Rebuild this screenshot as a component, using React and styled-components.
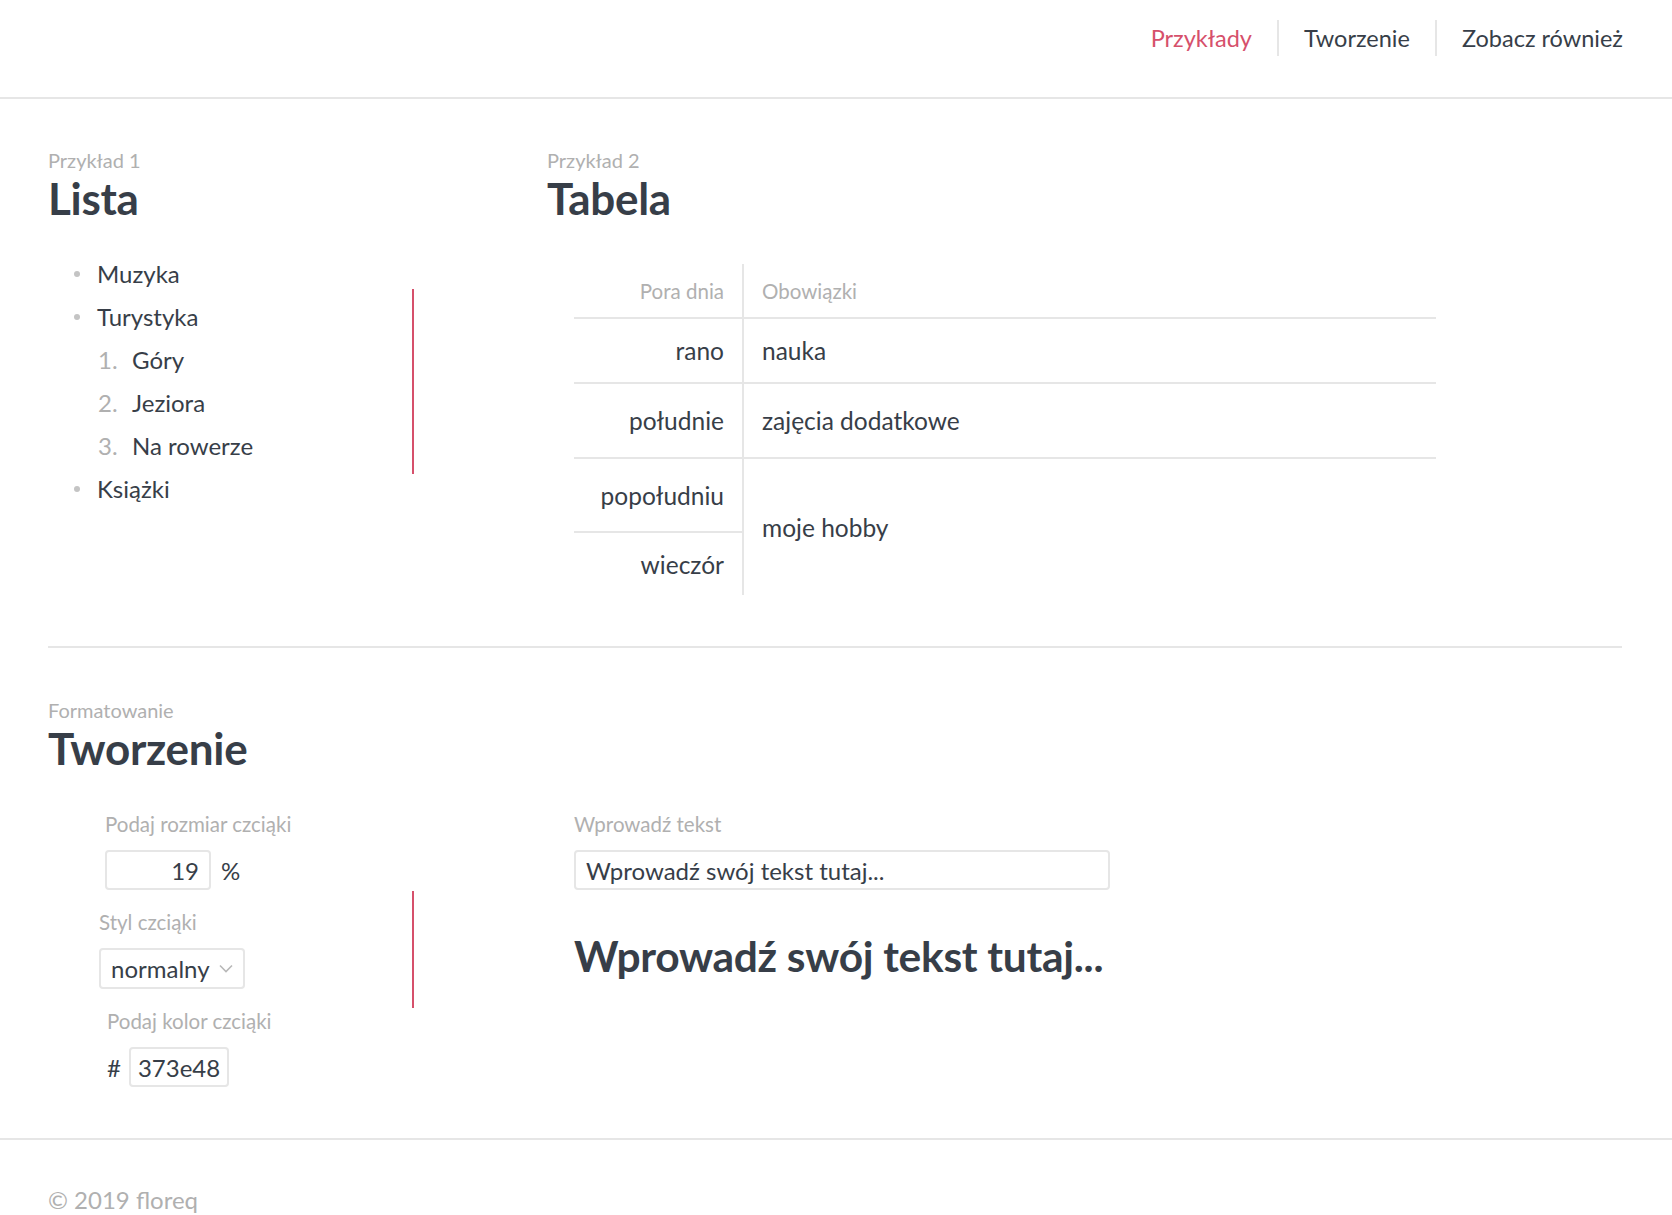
import React from 'react'
import styled, { createGlobalStyle } from 'styled-components'

const GlobalStyle = createGlobalStyle`
  html, body {
    margin: 0;
    padding: 0;
    background: #fff;
  }
  body {
    font-family: Lato, 'Noto Sans', sans-serif;
    color: #373e48;
  }
  * {
    box-sizing: border-box;
  }
`

const colors = {
  text: '#373e48',
  muted: '#b0b0b0',
  accent: '#d6506b',
  line: '#e6e6e6',
}

const Header = styled.header`
  height: 99px;
  border-bottom: 2px solid ${colors.line};
  display: flex;
  justify-content: flex-end;
  align-items: flex-start;
  padding: 20px 49px 0 0;
`

const Nav = styled.nav`
  display: flex;
`

const NavLink = styled.a`
  font-size: 23.5px;
  line-height: 36px;
  padding: 0 25px;
  color: ${({ active }) => (active ? colors.accent : colors.text)};
  text-decoration: none;
  border-left: 2px solid ${colors.line};
  cursor: pointer;

  &:first-child {
    border-left: none;
  }
  &:last-child {
    padding-right: 0;
  }
`

const Main = styled.main`
  padding: 0 50px 0 48px;
`

const Section = styled.section`
  display: grid;
  grid-template-columns: ${({ cols }) => cols || '1fr'};
  padding: ${({ pad }) => pad || '49px 0 51px'};
  border-bottom: ${({ divider }) => (divider ? `2px solid ${colors.line}` : 'none')};
`

const Kicker = styled.div`
  font-size: 20px;
  line-height: 24px;
  color: ${colors.muted};
`

const Title = styled.h2`
  font-size: 44px;
  font-weight: 700;
  line-height: 52px;
  margin: 0;
  color: ${colors.text};
  letter-spacing: -0.3px;
`

const SplitRow = styled.div`
  display: flex;
  align-items: center;
  margin-top: ${({ top }) => top || '28px'};
`

const RedRule = styled.div`
  width: 2px;
  height: ${({ h }) => h || '185px'};
  background: ${colors.accent};
  flex: none;
`

const BulletList = styled.ul`
  width: 364px;
  flex: none;
  margin: 0;
  padding: 0 0 0 49px;
  list-style: none;
`

const BulletItem = styled.li`
  font-size: 24px;
  line-height: 43px;
  position: relative;

  &::before {
    content: '';
    position: absolute;
    left: -23px;
    top: 19px;
    width: 6px;
    height: 6px;
    border-radius: 50%;
    background: #c4c4c4;
  }
`

const NumberList = styled.ol`
  margin: 0;
  padding: 0 0 0 35px;
  list-style: none;
  counter-reset: num;
`

const NumberItem = styled.li`
  counter-increment: num;
  position: relative;

  &::before {
    content: counter(num) '.';
    position: absolute;
    left: -34px;
    color: ${colors.muted};
  }
`

const TableWrap = styled.div`
  margin: 40px 0 0 27px;
`

const Table = styled.table`
  width: 862px;
  border-collapse: collapse;
  font-size: 24.5px;
`

const HeadCell = styled.th`
  font-weight: 400;
  font-size: 20.5px;
  color: ${colors.muted};
  height: 54px;
  padding: 0 18px;
  text-align: ${({ right }) => (right ? 'right' : 'left')};
  border-bottom: 2px solid ${colors.line};
  border-left: ${({ right }) => (right ? 'none' : `2px solid ${colors.line}`)};
  width: ${({ w }) => w || 'auto'};
`

const Row = styled.tr`
  height: ${({ h }) => h};
`

const Cell = styled.td`
  padding: 0 18px;
  text-align: ${({ right }) => (right ? 'right' : 'left')};
  border-bottom: ${({ last }) => (last ? 'none' : `2px solid ${colors.line}`)};
  border-left: ${({ right }) => (right ? 'none' : `2px solid ${colors.line}`)};
  vertical-align: middle;
`

const Controls = styled.div`
  width: 364px;
  flex: none;
  display: flex;
  flex-direction: column;
`

const Field = styled.div`
  padding-left: ${({ indent }) => indent};
  margin-bottom: ${({ mb }) => mb || '0'};
`

const FieldLabel = styled.label`
  display: block;
  font-size: 20.5px;
  line-height: 24px;
  color: ${colors.muted};
  margin-bottom: 14px;
`

const InlineRow = styled.div`
  display: flex;
  align-items: center;
  gap: ${({ gap }) => gap || '10px'};
  font-size: 24px;
`

const Box = styled.input`
  font-family: inherit;
  font-size: 24px;
  color: ${colors.text};
  height: 40px;
  width: ${({ w }) => w};
  border: 2px solid ${colors.line};
  border-radius: 4px;
  padding: 0 ${({ px }) => px || '10px'};
  text-align: ${({ align }) => align || 'left'};
  outline: none;
  background: #fff;
`

const SelectBox = styled.div`
  display: inline-flex;
  align-items: center;
  gap: 9px;
  height: 41px;
  padding: 0 10px;
  border: 2px solid ${colors.line};
  border-radius: 4px;
  font-size: 24px;
  cursor: pointer;
`

const Preview = styled.p`
  margin: 40px 0 0;
  font-size: 42.5px;
  font-weight: 700;
  line-height: 52px;
  letter-spacing: -0.3px;
`

const Footer = styled.footer`
  border-top: 2px solid ${colors.line};
  margin-top: 51px;
  padding: 45px 48px 0;
  font-size: 24px;
  color: ${colors.muted};
`

const Chevron = () => (
  <svg width="14" height="9" viewBox="0 0 14 9" fill="none">
    <path d="M1 1.5l6 6 6-6" stroke="#b8b8b8" strokeWidth="1.6" />
  </svg>
)

const rows = [
  { time: 'rano', duty: 'nauka', h: '65px' },
  { time: 'południe', duty: 'zajęcia dodatkowe', h: '75px' },
]

export default function App() {
  return (
    <>
      <GlobalStyle />
      <Header>
        <Nav>
          <NavLink active>Przykłady</NavLink>
          <NavLink>Tworzenie</NavLink>
          <NavLink>Zobacz również</NavLink>
        </Nav>
      </Header>
      <Main>
        <Section cols="499px 1fr" divider>
          <div>
            <Kicker>Przykład 1</Kicker>
            <Title>Lista</Title>
            <SplitRow>
              <BulletList>
                <BulletItem>Muzyka</BulletItem>
                <BulletItem>
                  Turystyka
                  <NumberList>
                    <NumberItem>Góry</NumberItem>
                    <NumberItem>Jeziora</NumberItem>
                    <NumberItem>Na rowerze</NumberItem>
                  </NumberList>
                </BulletItem>
                <BulletItem>Książki</BulletItem>
              </BulletList>
              <RedRule />
            </SplitRow>
          </div>
          <div>
            <Kicker>Przykład 2</Kicker>
            <Title>Tabela</Title>
            <TableWrap>
              <Table>
                <thead>
                  <tr>
                    <HeadCell right w="169px">Pora dnia</HeadCell>
                    <HeadCell>Obowiązki</HeadCell>
                  </tr>
                </thead>
                <tbody>
                  {rows.map((r) => (
                    <Row key={r.time} h={r.h}>
                      <Cell right>{r.time}</Cell>
                      <Cell>{r.duty}</Cell>
                    </Row>
                  ))}
                  <Row h="74px">
                    <Cell right>popołudniu</Cell>
                    <Cell rowSpan={2} last>moje hobby</Cell>
                  </Row>
                  <Row h="63px">
                    <Cell right last>wieczór</Cell>
                  </Row>
                </tbody>
              </Table>
            </TableWrap>
          </div>
        </Section>

        <Section pad="50px 0 0">
          <Kicker>Formatowanie</Kicker>
          <Title>Tworzenie</Title>
          <Section cols="526px 1fr" pad="38px 0 0">
            <SplitRow top="0">
              <Controls>
                <Field indent="57px" mb="20px">
                  <FieldLabel>Podaj rozmiar czciąki</FieldLabel>
                  <InlineRow>
                    <Box w="106px" align="right" defaultValue="19" />
                    <span>%</span>
                  </InlineRow>
                </Field>
                <Field indent="51px" mb="20px">
                  <FieldLabel>Styl czciąki</FieldLabel>
                  <SelectBox>
                    normalny
                    <Chevron />
                  </SelectBox>
                </Field>
                <Field indent="59px">
                  <FieldLabel>Podaj kolor czciąki</FieldLabel>
                  <InlineRow gap="8px">
                    <span>#</span>
                    <Box w="100px" px="7px" defaultValue="373e48" />
                  </InlineRow>
                </Field>
              </Controls>
              <RedRule h="117px" />
            </SplitRow>
            <div>
              <FieldLabel>Wprowadź tekst</FieldLabel>
              <Box w="536px" defaultValue="Wprowadź swój tekst tutaj..." />
              <Preview>Wprowadź swój tekst tutaj...</Preview>
            </div>
          </Section>
        </Section>
      </Main>
      <Footer>© 2019 floreq</Footer>
    </>
  )
}
